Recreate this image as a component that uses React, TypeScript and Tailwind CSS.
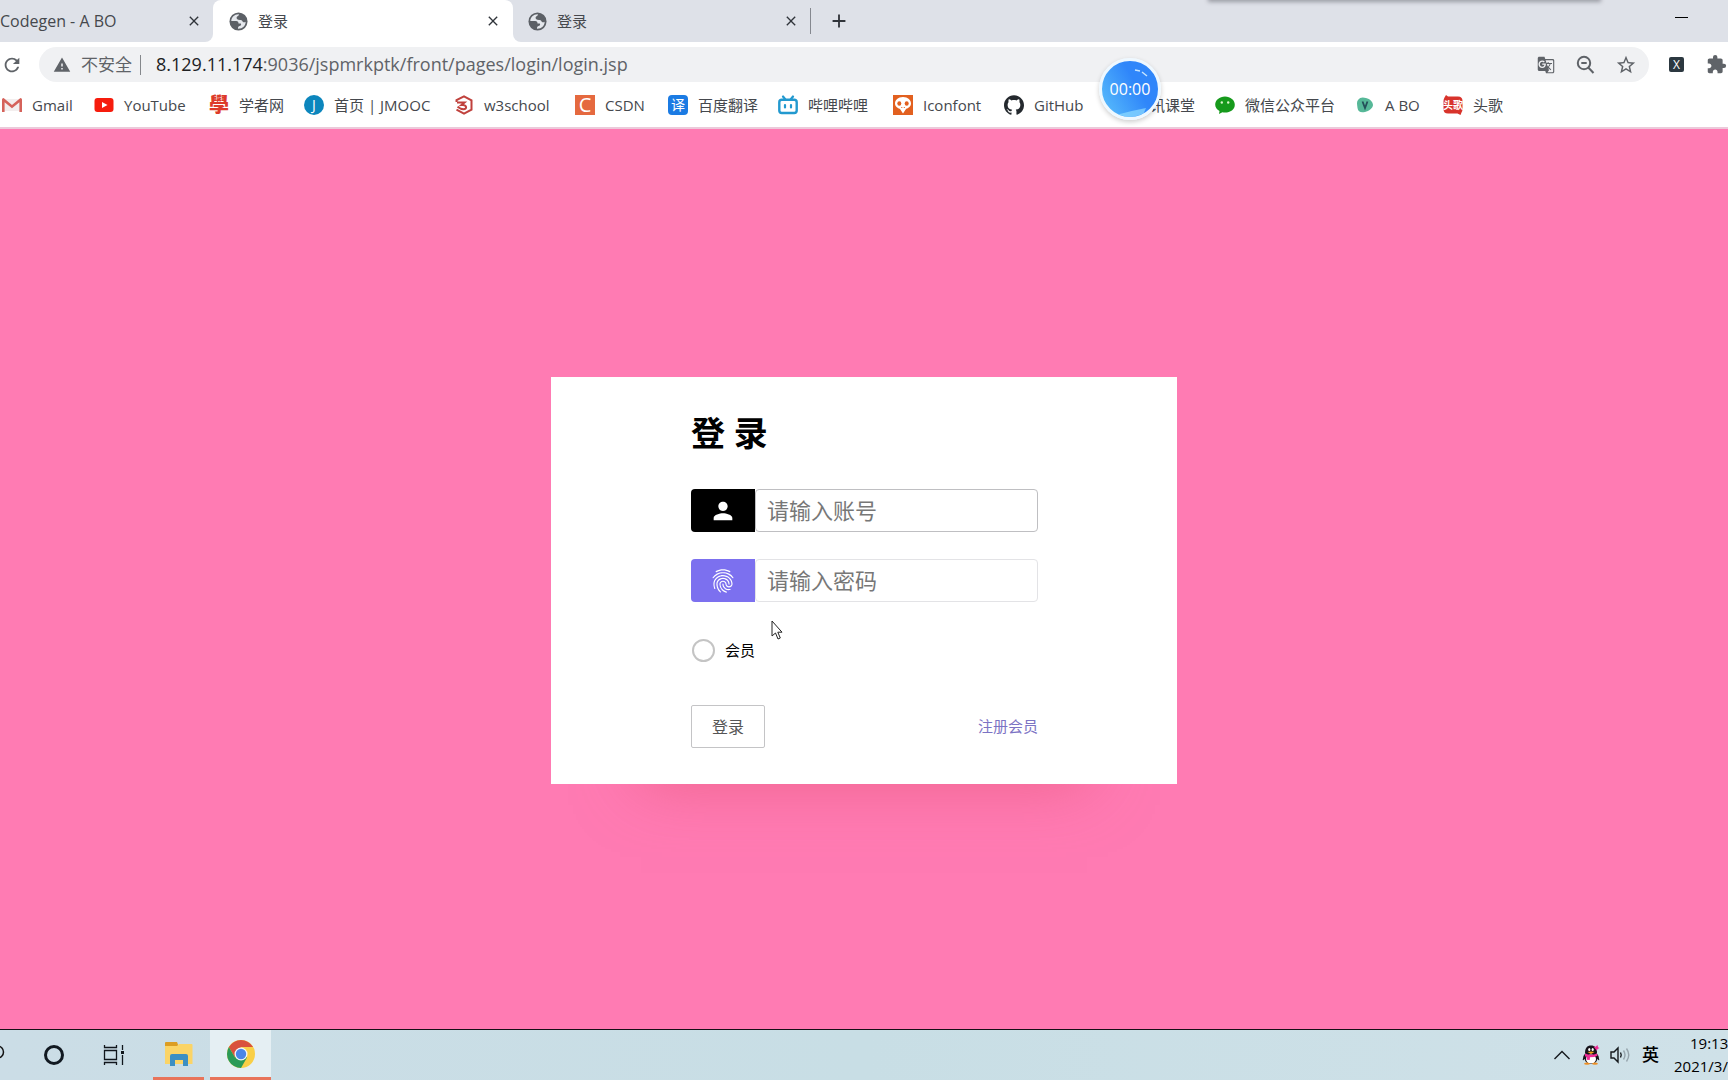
import React from "react";
import { MdPerson, MdFingerprint, MdRefresh, MdWarning, MdStarBorder, MdExtension, MdClose, MdAdd, MdGTranslate } from "react-icons/md";
import { SiGithub } from "react-icons/si";

function Globe() {
  return (
    <svg viewBox="0 0 20 20" className="size-[19px] shrink-0">
      <circle cx="10" cy="10" r="9.500" fill="#5c6066" />
      <path d="M10.500 2.300C6 2 2.500 5.500 2.400 9.500h5.100c2 0 2.500 1 2.500 2.500h2.500c.8 1.500-.3 2.500-1.500 2.800-1.500.3-1.500 1.700-1.500 2.800 4.500.3 8-3 8-7.300-1.500 1-3 .5-3.500-.8-.3-1-1.300-1.200-2.500-1.200-2.500 0-3.700-1-3.500-2.500.2-1.300 1.700-1.300 2-2 .2-.5.300-1 .5-1.500z" fill="#e4e7ec" />
    </svg>
  );
}

function Gmail() {
  return (
    <svg viewBox="0 0 20 20" className="size-5">
      <path d="M2 4h16v12H2z" fill="#f3eeee" />
      <path d="M0 4.500Q0 3 1.600 3L10 10l8.400-7Q20 3 20 4.500V17h-2.600V7.200L10 13.200 2.600 7.200V17H0z" fill="#d5625a" />
    </svg>
  );
}

function YouTube() {
  return (
    <svg viewBox="0 0 20 20" className="size-5">
      <rect x="0.500" y="3" width="19" height="14" rx="3" fill="#f61c0d" />
      <path d="M8 7l5.500 3L8 13z" fill="#fff" />
    </svg>
  );
}

function Scholar() {
  return <span className="flex size-5 items-center justify-center text-xl leading-5 font-black text-[#dd3a2a]">學</span>;
}

function Jmooc() {
  return (
    <span className="flex size-5 items-center justify-center rounded-full bg-[#0c86bd] text-sm leading-5 text-white">J</span>
  );
}

function W3() {
  return (
    <svg viewBox="0 0 20 20" className="size-5" fill="none" stroke="#c0413d" strokeWidth="2">
      <path d="M2.500 7V5.200L10 1.300l7.500 4v9.400L10 18.700l-7.500-4" />
      <path d="M3 7.500h7.500L7.500 10c5.500-.5 6 4.300 2 4.300-2 0-4-1-6-2.500" />
    </svg>
  );
}

function Csdn() {
  return <span className="flex size-5 items-center justify-center bg-[#e5693f] text-xl leading-5 text-white">C</span>;
}

function Translate() {
  return (
    <span className="flex size-5 items-center justify-center rounded-sm bg-[#1b7be3] text-sm leading-5 text-white">译</span>
  );
}

function Bilibili() {
  return (
    <svg viewBox="0 0 20 20" className="size-5" fill="none" stroke="#2299cf" strokeLinecap="round">
      <rect x="1.300" y="4.800" width="17.400" height="13.200" rx="2.500" strokeWidth="2.400" />
      <path d="M5 1.500l2 2.500M15 1.500L13 4M7 10v2.500M13 10v2.500" strokeWidth="2.200" />
    </svg>
  );
}

function Iconfont() {
  return (
    <svg viewBox="0 0 20 20" className="size-5">
      <rect width="20" height="20" fill="#e2601f" />
      <path d="M10 2c5 0 8 3 8 6.500 0 3-2.500 4.500-5 5.500L10 18.500 7 14c-2.500-1-5-2.500-5-5.500C2 5 5 2 10 2z" fill="#fff" />
      <ellipse cx="6.300" cy="8.500" rx="2" ry="2.200" fill="#e2601f" />
      <ellipse cx="13.700" cy="8.500" rx="2" ry="2.200" fill="#e2601f" />
      <path d="M8.300 12.500h1M10.800 12.500h1" stroke="#e2601f" />
    </svg>
  );
}

function WeChat() {
  return (
    <svg viewBox="0 0 20 20" className="size-5">
      <path d="M10 1.500c5.500 0 9.800 3.600 9.800 8.300S15.500 17.600 10 17.600c-1 0-1.800 0-2.600-.3L4 19l.5-3C1.800 14.500.2 12.400.2 9.800.2 5.100 4.500 1.500 10 1.500z" fill="#169a1c" />
      <circle cx="6.800" cy="7.500" r="1.200" fill="#d9f5c9" />
      <circle cx="13.200" cy="7.500" r="1.200" fill="#d9f5c9" />
    </svg>
  );
}

function VBlob() {
  return (
    <svg viewBox="0 0 20 20" className="size-5">
      <path d="M3 5c2-3 5-3 8-2 4 1 7 4 7 7s-4 6-8 7-7 0-7.500-4S1.500 7 3 5z" fill="#56b898" />
      <path d="M7.500 6.500L10 13l2.500-6.500" fill="none" stroke="#24505a" strokeWidth="1.800" />
    </svg>
  );
}

function Touge() {
  return (
    <span className="relative flex size-5 items-center justify-center text-[10px] leading-5 font-bold text-white">
      <svg viewBox="0 0 20 20" className="absolute inset-0 size-5">
        <path d="M3 0l2 1.500h10q4.500 0 4.500 4.500v8q0 2-1 3.500L17.500 20l-3-1.500H5Q.5 18.500.5 14V6q0-2 1-3.500z" fill="#d8332b" />
      </svg>
      <span className="relative">头歌</span>
    </span>
  );
}

const bookmarks = [
  { label: "Gmail", icon: <Gmail />, width: "w-[92px]" },
  { label: "YouTube", icon: <YouTube />, width: "w-[115px]" },
  { label: "学者网", icon: <Scholar />, width: "w-[95px]" },
  { label: "首页 | JMOOC", icon: <Jmooc />, width: "w-[150px]" },
  { label: "w3school", icon: <W3 />, width: "w-[121px]" },
  { label: "CSDN", icon: <Csdn />, width: "w-[93px]" },
  { label: "百度翻译", icon: <Translate />, width: "w-[110px]" },
  { label: "哔哩哔哩", icon: <Bilibili />, width: "w-[115px]" },
  { label: "Iconfont", icon: <Iconfont />, width: "w-[111px]" },
  { label: "GitHub", icon: <SiGithub className="size-5 text-[#24292e]" />, width: "w-[101px]" },
  { label: "腾讯课堂", icon: <span className="size-5" />, width: "w-[110px]" },
  { label: "微信公众平台", icon: <WeChat />, width: "w-[140px]" },
  { label: "A BO", icon: <VBlob />, width: "w-[88px]" },
  { label: "头歌", icon: <Touge />, width: "w-[70px]" },
];

function CloseButton({ label }: { label: string }) {
  return (
    <button aria-label={label} className="ml-auto flex size-4 items-center justify-center text-[#30343a]">
      <MdClose className="size-4" />
    </button>
  );
}

function TabStrip() {
  return (
    <div className="relative flex h-[42px] items-stretch overflow-hidden bg-white text-[15px] text-[#45484d]">
      <div className="flex w-[213px] shrink-0 items-center rounded-br-lg bg-[#dee1e8] pr-[11px]">
        <span className="text-base">Codegen - A BO</span>
        <CloseButton label="关闭 Codegen" />
      </div>
      <div className="flex shrink-0 bg-[linear-gradient(#dee1e8_50%,#fff_50%)]">
        <div className="flex w-[300px] items-center gap-2.5 rounded-t-lg bg-white pr-3 pl-4">
          <Globe />
          <span>登录</span>
          <CloseButton label="关闭当前标签页" />
        </div>
      </div>
      <div className="flex min-w-0 flex-1 rounded-bl-lg bg-[#dee1e8]">
        <div className="my-2 flex w-[298px] shrink-0 items-center gap-2.5 border-r border-[#85888f] pr-[11px] pl-[15px]">
          <Globe />
          <span>登录</span>
          <CloseButton label="关闭标签页" />
        </div>
        <button aria-label="新标签页" className="ml-[17px] flex items-center text-[#30343a]">
          <MdAdd className="size-[22px]" />
        </button>
        <button aria-label="最小化" className="mr-10 ml-auto flex items-center">
          <span className="mb-2 h-px w-[13px] bg-black" />
        </button>
      </div>
      <div className="absolute -top-2 right-32 h-2 w-[391px] shadow-[0_1px_4px_1px_#9a9ca4]" />
    </div>
  );
}

function AddressBar() {
  return (
    <div className="flex h-[45px] items-center bg-white text-[#5f6368]">
      <button aria-label="重新加载" className="ml-px shrink-0"><MdRefresh className="size-[22px]" /></button>
      <div className="ml-4 flex h-[35px] min-w-0 flex-1 items-center rounded-full bg-[#f0f1f3] pr-3 pl-[14px] text-[18px]">
        <MdWarning className="size-[18px]" />
        <span className="ml-2.5 text-[17px]">不安全</span>
        <span className="ml-2 h-5 w-px bg-[#85888c]" />
        <span className="ml-[15px] whitespace-nowrap"><span className="text-[#202124]">8.129.11.174</span>:9036/jspmrkptk/front/pages/login/login.jsp</span>
        <div className="ml-auto flex items-center gap-5">
          <button aria-label="翻译此页"><MdGTranslate className="size-[18px]" /></button>
          <button aria-label="缩放">
            <svg viewBox="0 0 20 20" className="size-5" fill="none" stroke="currentColor" strokeWidth="2">
              <circle cx="9" cy="8" r="6.200" />
              <path d="M13.300 12.500l5.200 5.500M6.300 8h5.400" />
            </svg>
          </button>
          <button aria-label="收藏"><MdStarBorder className="size-[22px]" /></button>
        </div>
      </div>
      <button aria-label="扩展 X" className="ml-5 flex size-[15px] shrink-0 items-center justify-center rounded-xs bg-[#2c3840] text-[12px] text-white">X</button>
      <button aria-label="扩展程序" className="mr-px ml-[22px] shrink-0"><MdExtension className="size-[21px]" /></button>
    </div>
  );
}

function Taskbar() {
  return (
    <div className="flex h-[51px] shrink-0 items-stretch overflow-hidden border-t border-[#151015] bg-[linear-gradient(90deg,#cbdde6,#c8dee5_50%,#cfe1e8)] text-black">
      <button aria-label="搜索" className="flex w-7 items-center">
        <svg viewBox="0 0 6 20" className="h-5 w-1.5" fill="none" stroke="#111" strokeWidth="1.500"><circle cx="-2.500" cy="7" r="6" /></svg>
      </button>
      <button aria-label="Cortana" className="flex w-[52px] items-center justify-center">
        <span className="size-5 rounded-full border-3 border-[#111921]" />
      </button>
      <button aria-label="任务视图" className="ml-[23px] flex w-[50px] items-center">
        <svg viewBox="0 0 22 20" className="h-5 w-[22px]" fill="none" stroke="#10161c" strokeWidth="1.300">
          <path d="M1.500 5.500h12v9h-12zM1.500 0v2.500h12V0M1.500 20v-2.500h12V20M19.500 0v5M19.500 10v10" />
          <path d="M18 6h3v3h-3z" fill="#10161c" stroke="none" />
        </svg>
      </button>
      <button aria-label="文件资源管理器" className="flex w-[51px] items-center justify-center border-b-3 border-[#e8745a]">
        <svg viewBox="0 0 28 24" className="h-6 w-7">
          <path d="M0 1q0-1 1-1h11l1.500 4H0z" fill="#dc9d23" />
          <path d="M0 4h12l2-2h12.500q1 0 1 1v19H0z" fill="#fbd466" />
          <path d="M5 24V14q0-2 2-2h14q2 0 2 2v10h-5v-6h-8v6z" fill="#3c8fc3" />
        </svg>
      </button>
      <button aria-label="Chrome" className="ml-1.5 flex w-[61px] items-center justify-center border-b-3 border-[#e8745a] bg-[#e5eff3]">
        <svg viewBox="0 0 28 28" className="size-7">
          <circle cx="14" cy="14" r="14" fill="#f9cf46" />
          <path d="M14 7h12.100A14 14 0 0 0 1.880 7L8 17.500z" fill="#d9513c" />
          <path d="M1.880 7A14 14 0 0 0 14 28l6-10.500L14 14 8 17.500z" fill="#2a9a57" />
          <circle cx="14" cy="14" r="6.500" fill="#f5f7f8" />
          <circle cx="14" cy="14" r="5.200" fill="#4a86e8" />
        </svg>
      </button>
      <div className="ml-auto flex items-center">
        <svg viewBox="0 0 16 10" className="h-2.5 w-4" fill="none" stroke="#15191d" strokeWidth="1.400"><path d="M.5 9L8 1.500 15.500 9" /></svg>
        <svg viewBox="0 0 18 20" className="ml-3 h-5 w-[18px]">
          <path d="M3.500 8Q.5 11 .7 15q1 .5 2-1l12.600 0q1 1.500 2 1Q17.500 11 14.500 8z" fill="#17131a" />
          <path d="M3 8C3 3 5 .5 9 .5S15 3 15 8z" fill="#17131a" />
          <ellipse cx="9" cy="14" rx="6.200" ry="5" fill="#17131a" />
          <ellipse cx="9" cy="14" rx="5" ry="4.600" fill="#fff" />
          <ellipse cx="7.300" cy="4.500" rx="1.100" ry="1.500" fill="#fff" />
          <ellipse cx="10.700" cy="4.500" rx="1.100" ry="1.500" fill="#fff" />
          <path d="M5.500 7q3.500-1.200 7 0L9 9z" fill="#f4a51c" />
          <path d="M3 8.500q6 2.500 12 0l.5 2.300q-3 1.500-7.500 1.500l-.3 2.700-3-.3.200-2.800-2-.7z" fill="#ef2b95" />
          <path d="M11.500 1.500l2 .3L15.500 0l.5 2.200 1.500.8-2 1-.7 1.800-1.300-1.800z" fill="#ef2b95" />
          <path d="M2 18.500q3-2 6 0 0 1.300-3 1.300t-3-1.300zM10 18.500q3-2 6 0 0 1.300-3 1.300t-3-1.300z" fill="#ee8f22" />
        </svg>
        <svg viewBox="0 0 22 20" className="ml-2.5 h-5 w-[22px]" fill="none" stroke="#15191d" strokeWidth="1.400">
          <path d="M1 7h3l4-4v14l-4-4H1zM10.500 7.500q1.500 2.500 0 5" />
          <path d="M13.500 5.500q3 4.500 0 9M16.500 3.500q4.500 6.500 0 13" stroke="#97a5ad" />
        </svg>
        <span className="ml-2.5 text-[17px] font-medium">英</span>
        <div className="ml-[15px] w-[54px] text-[15px] leading-[23px] whitespace-nowrap">
          <div className="pl-4">19:13</div>
          <div>2021/3/</div>
        </div>
      </div>
    </div>
  );
}

function LoginCard() {
  return (
    <form className="w-[626px] bg-white pt-8 pr-[139px] pb-9 pl-[140px] shadow-[0_90px_60px_-90px_rgba(225,80,110,0.55)]" onSubmit={(e) => e.preventDefault()}>
      <h1 className="text-[34px] leading-[48px] font-bold text-black">登 录</h1>
      <div className="mt-8 flex h-[43px]">
        <label htmlFor="account" className="flex w-16 shrink-0 items-center justify-center rounded-l bg-black text-white">
          <MdPerson className="size-7" />
        </label>
        <input id="account" type="text" placeholder="请输入账号" className="min-w-0 flex-1 rounded border border-[#bfbfc2] px-[11px] text-[22px] text-[#333] outline-none placeholder:text-[#777]" />
      </div>
      <div className="mt-[27px] flex h-[43px]">
        <label htmlFor="password" className="flex w-16 shrink-0 items-center justify-center rounded-l bg-[#7c70ef] text-white">
          <MdFingerprint className="size-7" />
        </label>
        <input id="password" type="password" placeholder="请输入密码" className="min-w-0 flex-1 rounded border border-[#e3e3e6] px-[11px] text-[22px] text-[#333] outline-none placeholder:text-[#777]" />
      </div>
      <label className="mt-9 flex h-6 w-fit items-center gap-2.5 pl-px text-[15px] text-black">
        <input type="radio" name="role" className="size-[23px] appearance-none rounded-full border-2 border-[#c4c4c4] bg-white checked:bg-[#7c70ef]" />
        会员
      </label>
      <div className="mt-[43px] flex h-[43px] items-center justify-between">
        <button type="submit" className="h-[43px] w-[74px] rounded-xs border border-[#c4c4c6] text-base text-[#555]">登录</button>
        <a href="#register" className="text-[15px] text-[#7c73c4]">注册会员</a>
      </div>
    </form>
  );
}

export default function App() {
  return (
    <div className="flex h-screen flex-col overflow-hidden bg-white font-['Open_Sans','Noto_Sans_CJK_SC',sans-serif]">
      <header className="relative shrink-0 border-b-2 border-[#ecc9da]">
        <TabStrip />
        <AddressBar />
        <nav className="flex h-10 items-center overflow-hidden pb-1 pl-0.5 text-[15px] text-[#45484d]">
          {bookmarks.map((b) => (
            <a key={b.label} href={"#" + b.label} className={"flex shrink-0 items-center gap-2.5 whitespace-nowrap " + b.width}>
              <span className="flex size-5 shrink-0 items-center justify-center">{b.icon}</span>
              {b.label}
            </a>
          ))}
        </nav>
        <div className="absolute top-[58px] left-[1099px] flex size-[62px] items-center justify-center overflow-hidden rounded-full border-3 border-[#eef8ff] bg-[linear-gradient(60deg,#5cc1fb,#2f86fa_60%)] text-base text-white shadow-[0_2px_5px_rgba(0,0,0,0.2)]">
          <svg viewBox="0 0 56 56" className="absolute inset-0 size-14">
            <path d="M14 54Q28 50 44 47L40 56H16z" fill="#8fdcff" opacity=".7" />
            <path d="M33 9l5 1M40 11l5 4" stroke="#c5e5ff" strokeWidth="1.500" fill="none" />
          </svg>
          <span className="relative">00:00</span>
        </div>
      </header>
      <main className="relative flex min-h-0 flex-1 items-center justify-center bg-[#ff7bb3] pt-[3px]">
        <LoginCard />
        <svg viewBox="0 0 12 20" className="absolute top-[491px] left-[771px] h-5 w-3">
          <path d="M1 1v15l3.500-3 2.500 6 2.300-1-2.500-5.800H11z" fill="#fff" stroke="#222" />
        </svg>
      </main>
      <Taskbar />
    </div>
  );
}
